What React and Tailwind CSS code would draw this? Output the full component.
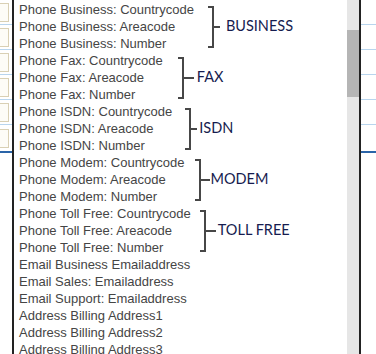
const groups = [
  { name: "Business", label: "BUSINESS", ml: "ml-[14px]", tick: "w-[6px]", gap: "ml-[6px]" },
  { name: "Fax", label: "FAX", ml: "ml-[15px]", tick: "w-[10px]", gap: "ml-[3px]" },
  { name: "ISDN", label: "ISDN", ml: "ml-[13px]", tick: "w-[6px]", gap: "ml-[2px]" },
  { name: "Modem", label: "MODEM", ml: "ml-[10px]", tick: "w-[9px]", gap: "ml-[1px]" },
  { name: "Toll Free", label: "TOLL FREE", ml: "ml-[9px]", tick: "w-[10px]", gap: "ml-[2px]" },
];

const tail = [
  "Email Business Emailaddress",
  "Email Sales: Emailaddress",
  "Email Support: Emailaddress",
  "Address Billing Address1",
  "Address Billing Address2",
  "Address Billing Address3",
];

function Row({ children }) {
  return <div className="h-[17px] whitespace-nowrap text-[13px] leading-[17px] text-[#454545]">{children}</div>;
}

function Group({ g }) {
  return (
    <div className="flex items-center">
      <div className="flex flex-col">
        <Row>Phone {g.name}: Countrycode</Row>
        <Row>Phone {g.name}: Areacode</Row>
        <Row>Phone {g.name}: Number</Row>
      </div>
      <div className={`flex items-center ${g.ml}`}>
        <div className="h-[42px] w-[6px] border-y-2 border-r-2 border-[#474747]" />
        <div className={`h-[2px] ${g.tick} bg-[#474747]`} />
        <span className={`${g.gap} font-['Lato',sans-serif] text-[14.5px] font-normal leading-none text-[#161c4f]`}>{g.label}</span>
      </div>
    </div>
  );
}

function LeftStrip() {
  return (
    <div className="flex w-[12px] shrink-0 flex-col">
      {[0, 1, 2, 3, 4].map((i) => (
        <div key={i} className="flex h-[25px] items-center border-b border-[#b8d5ee]">
          <div className="h-[19px] w-[9px] border-y border-r border-[#d9d0b4] bg-[#fdfcf7]" />
        </div>
      ))}
      <div className="flex h-[28px] items-center border-b-2 border-[#2a64a8]">
        <div className="h-[19px] w-[9px] border-y border-r border-[#d9d0b4] bg-[#fdfcf7]" />
      </div>
    </div>
  );
}

function RightStrip() {
  return (
    <div className="flex w-[15px] shrink-0 flex-col">
      {[0, 1, 2, 3, 4].map((i) => (
        <div key={i} className="h-[25px] border-b border-[#b8d5ee]" />
      ))}
      <div className="h-[28px] border-b-2 border-[#2a64a8]" />
    </div>
  );
}

export default function App() {
  return (
    <div className="flex h-[354px] w-[376px] overflow-hidden bg-white font-['Liberation_Sans',Arial,sans-serif]">
      <LeftStrip />
      <div className="flex w-[349px] shrink-0 border-x-2 border-[#222]">
        <div className="flex-1 overflow-hidden pl-[5px] pt-[1px]">
          {groups.map((g) => (
            <Group key={g.name} g={g} />
          ))}
          {tail.map((t) => (
            <Row key={t}>{t}</Row>
          ))}
        </div>
        <div className="w-[12px] shrink-0 bg-[#e6e6e6]">
          <div className="mt-[30px] h-[67px] bg-[#b5b5b5]" />
        </div>
      </div>
      <RightStrip />
    </div>
  );
}
